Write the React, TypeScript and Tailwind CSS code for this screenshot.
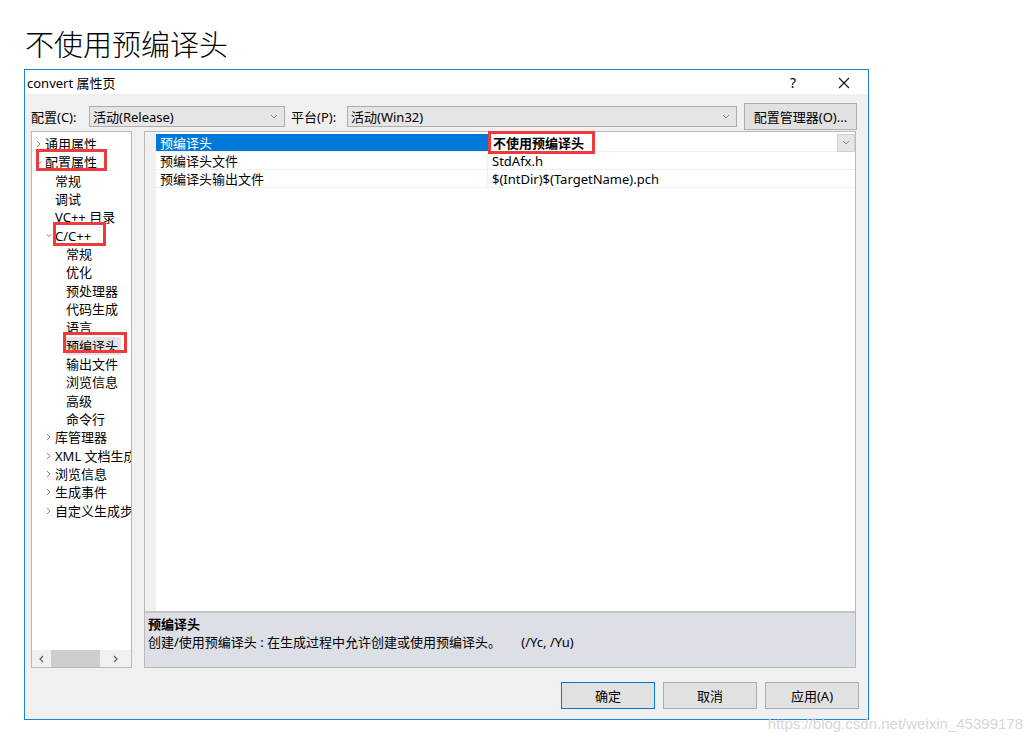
import React from "react";

const F = "font-['Noto_Sans','Noto_Sans_CJK_SC',sans-serif]";

function ChevronRight({ className = "" }: { className?: string }) {
  return (
    <svg width="5" height="8" viewBox="0 0 5 8" className={className}>
      <polyline points="1,1 4,4 1,7" fill="none" stroke="#8a8a8a" strokeWidth="1" />
    </svg>
  );
}
function ChevronDown({ className = "", color = "#6a6a6a" }: { className?: string; color?: string }) {
  return (
    <svg width="8" height="5" viewBox="0 0 8 5" className={className}>
      <polyline points="1,1 4,4 7,1" fill="none" stroke={color} strokeWidth="1" />
    </svg>
  );
}

type Item = { label: string; level: number; arrow?: "r" | "d"; selected?: boolean };
const tree: Item[] = [
  { label: "通用属性", level: 0, arrow: "r" },
  { label: "配置属性", level: 0, arrow: "d" },
  { label: "常规", level: 1 },
  { label: "调试", level: 1 },
  { label: "VC++ 目录", level: 1 },
  { label: "C/C++", level: 1, arrow: "d" },
  { label: "常规", level: 2 },
  { label: "优化", level: 2 },
  { label: "预处理器", level: 2 },
  { label: "代码生成", level: 2 },
  { label: "语言", level: 2 },
  { label: "预编译头", level: 2, selected: true },
  { label: "输出文件", level: 2 },
  { label: "浏览信息", level: 2 },
  { label: "高级", level: 2 },
  { label: "命令行", level: 2 },
  { label: "库管理器", level: 1, arrow: "r" },
  { label: "XML 文档生成", level: 1, arrow: "r" },
  { label: "浏览信息", level: 1, arrow: "r" },
  { label: "生成事件", level: 1, arrow: "r" },
  { label: "自定义生成步", level: 1, arrow: "r" },
];

const arrowPos = ["w-[13px] pl-[4px]", "w-[23px] pl-[14px]", "w-[34px]"];

function TreeRow({ it }: { it: Item }) {
  return (
    <div className="h-[18.33px] flex items-center whitespace-nowrap">
      <div className={`${arrowPos[it.level]} shrink-0 flex items-center`}>
        {it.arrow === "r" && <ChevronRight />}
        {it.arrow === "d" && <ChevronDown className="w-[6px]" color="#555" />}
      </div>
      <span className={`leading-[18px] ${it.selected ? "bg-[#e3e3e3] pr-[3px]" : ""}`}>{it.label}</span>
    </div>
  );
}

function RedBox({ cls }: { cls: string }) {
  return <div className={`absolute border-[3px] border-[#ee3a3a] pointer-events-none ${cls}`} />;
}

export default function App() {
  return (
    <div className={`relative w-[1033px] h-[743px] bg-white text-black ${F} text-[13px]`}>
      <div className="pt-[26px] pl-[24px] flex flex-col">
        <div className="ml-[1px] text-[29px] leading-[34px] font-['Noto_Sans_CJK_SC',sans-serif] font-light">不使用预编译头</div>
        <div className="mt-[9px] w-[845px] h-[651px] border border-[#1883d7] bg-[#f0f0f0] flex flex-col">
          {/* title bar */}
          <div className="h-[24px] bg-white flex items-center pl-[2px] pr-[18px]">
            <span className="leading-[18px] mt-[1px]">convert 属性页</span>
            <span className="ml-auto mt-[1px] mr-[2px] text-[14px]">?</span>
            <svg width="12" height="12" viewBox="0 0 12 12" className="ml-[40px] mt-[1px]">
              <path d="M1 1 L11 11 M11 1 L1 11" stroke="#111" strokeWidth="1.1" />
            </svg>
          </div>
          {/* toolbar */}
          <div className="mt-[9px] h-[27px] flex items-center pl-[6px]">
            <span className="w-[58px] leading-[18px]">配置(C):</span>
            <div className="w-[196px] h-[21px] bg-[#e5e5e5] border border-[#adadad] flex items-center pl-[3px] pr-[6px]">
              <span className="leading-[18px]">活动(Release)</span>
              <ChevronDown className="ml-auto" color="#888" />
            </div>
            <span className="ml-[6px] w-[56px] leading-[18px]">平台(P):</span>
            <div className="w-[390px] h-[21px] bg-[#e5e5e5] border border-[#adadad] flex items-center pl-[3px] pr-[6px]">
              <span className="leading-[18px]">活动(Win32)</span>
              <ChevronDown className="ml-auto" color="#888" />
            </div>
            <div className="ml-[7px] w-[113px] h-[27px] bg-[#e1e1e1] border border-[#adadad] flex items-center justify-center">
              <span className="leading-[18px]">配置管理器(O)...</span>
            </div>
          </div>
          {/* main */}
          <div className="mt-[1px] h-[537px] flex pl-[6px]">
            {/* tree */}
            <div className="w-[101px] h-full bg-white border border-[#b9b9b9] flex flex-col">
              <div className="flex-1 overflow-hidden pt-[2.8px]">
                {tree.map((it, i) => (
                  <TreeRow key={i} it={it} />
                ))}
              </div>
              <div className="h-[17px] bg-[#f0f0f0] flex items-center">
                <div className="w-[19px] flex justify-center">
                  <svg width="5" height="8" viewBox="0 0 5 8">
                    <polyline points="4,1 1,4 4,7" fill="none" stroke="#606060" strokeWidth="1.2" />
                  </svg>
                </div>
                <div className="w-[49px] h-[17px] bg-[#cdcdcd]" />
                <div className="flex-1 flex justify-center">
                  <svg width="5" height="8" viewBox="0 0 5 8">
                    <polyline points="1,1 4,4 1,7" fill="none" stroke="#606060" strokeWidth="1.2" />
                  </svg>
                </div>
              </div>
            </div>
            {/* right panel */}
            <div className="ml-[12px] w-[712px] h-full border border-[#b9b9b9] flex flex-col bg-white">
              <div className="flex-1 flex">
                <div className="w-[11px] bg-[#f0f0f0]" />
                <div className="flex-1 flex flex-col pt-[2px]">
                  <div className="h-[18px] flex border-b border-[#f0f0f0]">
                    <div className="w-[332px] bg-[#0078d7] text-white pl-[4px] flex items-center">
                      <span className="leading-[18px]">预编译头</span>
                    </div>
                    <div className="flex-1 flex items-center pl-[5px]">
                      <span className="leading-[18px] font-bold">不使用预编译头</span>
                      <div className="ml-auto w-[18px] h-[18px] bg-[#e5e5e5] border border-[#cfcfcf] flex items-center justify-center">
                        <ChevronDown color="#888" />
                      </div>
                    </div>
                  </div>
                  <div className="h-[18px] flex border-b border-[#f0f0f0]">
                    <div className="w-[332px] pl-[4px] flex items-center border-r border-[#f0f0f0]">
                      <span className="leading-[18px]">预编译头文件</span>
                    </div>
                    <div className="flex-1 flex items-center pl-[4px]">
                      <span className="leading-[18px]">StdAfx.h</span>
                    </div>
                  </div>
                  <div className="h-[18px] flex border-b border-[#f0f0f0]">
                    <div className="w-[332px] pl-[4px] flex items-center border-r border-[#f0f0f0]">
                      <span className="leading-[18px]">预编译头输出文件</span>
                    </div>
                    <div className="flex-1 flex items-center pl-[4px]">
                      <span className="leading-[18px]">$(IntDir)$(TargetName).pch</span>
                    </div>
                  </div>
                </div>
              </div>
              <div className="h-[56px] border-t-2 border-[#c4c4c4] bg-[#dcdfe6] pl-[3px] pt-[2px]">
                <div className="leading-[18px] font-bold">预编译头</div>
                <div className="leading-[18px] whitespace-pre">
                  创建/使用预编译头 : 在生成过程中允许创建或使用预编译头。      (/Yc, /Yu)
                </div>
              </div>
            </div>
          </div>
          {/* buttons */}
          <div className="mt-[14px] h-[27px] flex justify-end pr-[9px] gap-[8px]">
            <div className="w-[94px] h-[27px] bg-[#e1e1e1] border border-[#0078d7] flex items-center justify-center">
              <span className="leading-[18px]">确定</span>
            </div>
            <div className="w-[94px] h-[27px] bg-[#e1e1e1] border border-[#adadad] flex items-center justify-center">
              <span className="leading-[18px]">取消</span>
            </div>
            <div className="w-[94px] h-[27px] bg-[#e1e1e1] border border-[#adadad] flex items-center justify-center">
              <span className="leading-[18px]">应用(A)</span>
            </div>
          </div>
        </div>
      </div>

      {/* annotations */}
      <RedBox cls="left-[36px] top-[149px] w-[71px] h-[22px]" />
      <RedBox cls="left-[53px] top-[222px] w-[53px] h-[24px]" />
      <RedBox cls="left-[63px] top-[332px] w-[64px] h-[21px]" />
      <RedBox cls="left-[488px] top-[131px] w-[107px] h-[23px]" />

      <div className="absolute right-[10px] top-[714px] text-[15px] leading-[20px] text-[#d6d6d6] font-['Liberation_Sans',sans-serif]">
        https://blog.csdn.net/weixin_45399178
      </div>
    </div>
  );
}
